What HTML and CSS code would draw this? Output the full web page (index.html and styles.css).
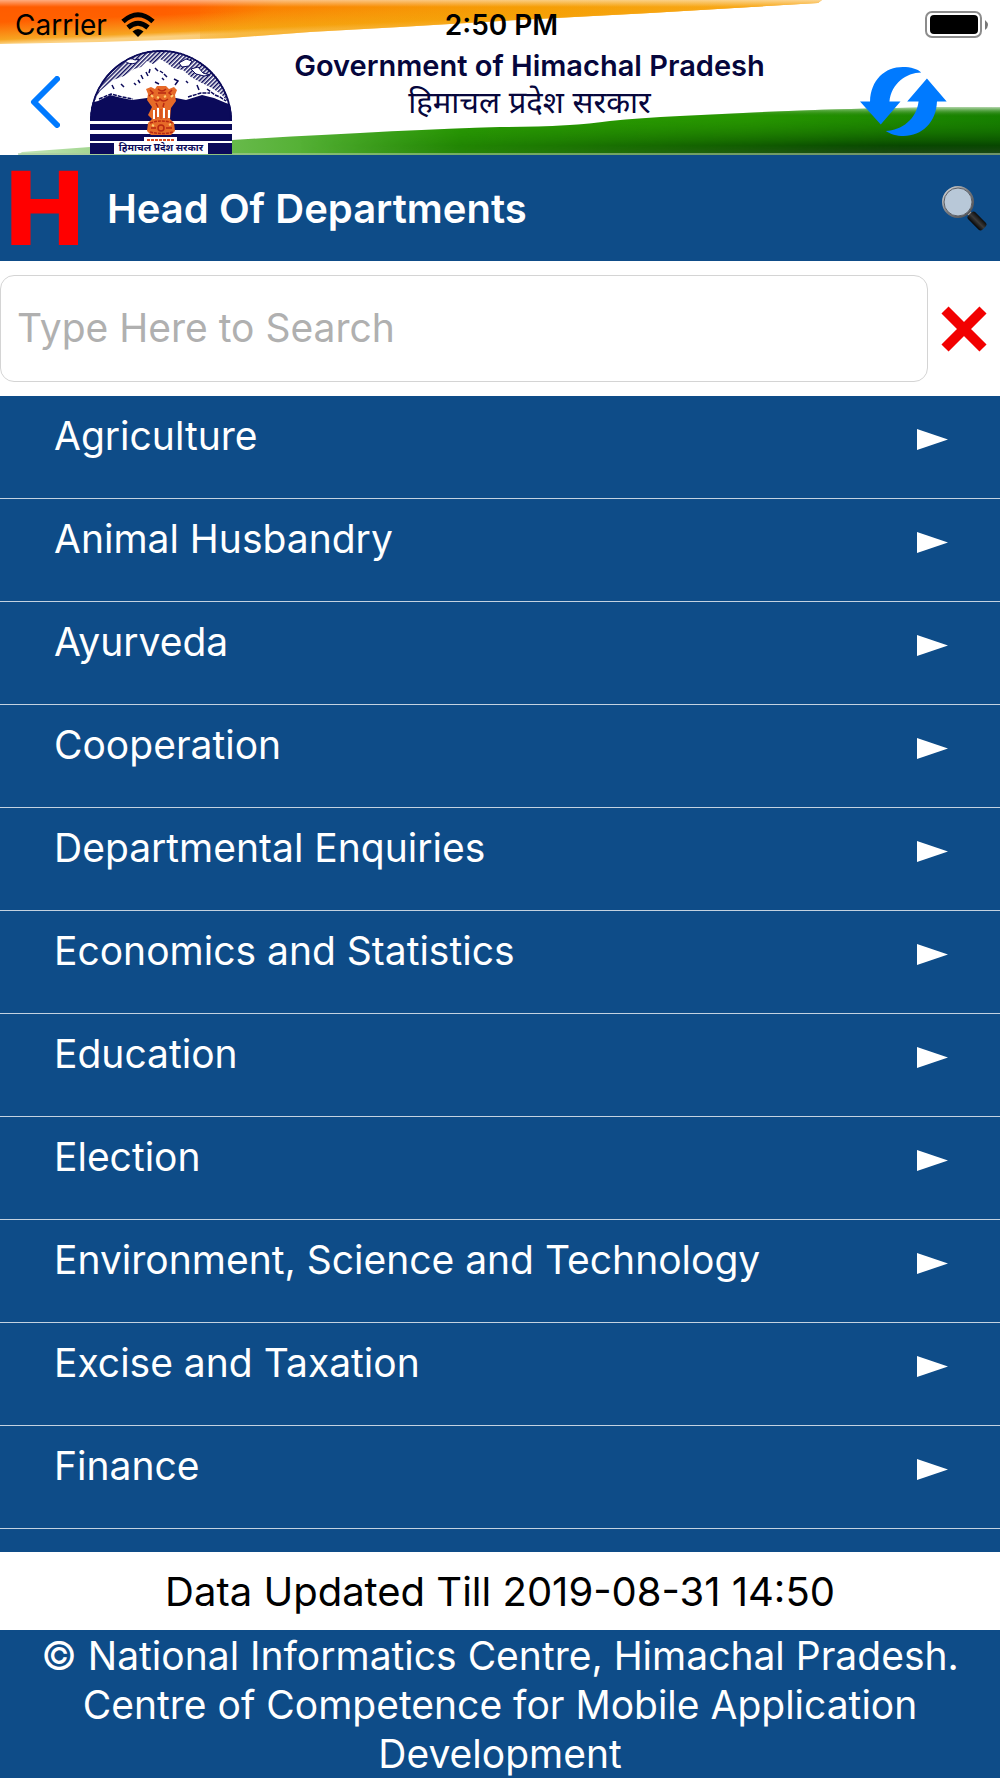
FILE: index.html
```html
<!DOCTYPE html>
<html lang="en">
<head>
    <meta charset="UTF-8">
    <meta name="viewport" content="width=device-width, initial-scale=1.0">
    <title>Head Of Departments</title>
    <link rel="stylesheet" href="styles.css">
</head>
<body>

    <header class="header">
        <!-- tricolour background -->
        <svg class="header-bg" viewBox="0 0 1000 155" preserveAspectRatio="none" aria-hidden="true">
            <defs>
                <linearGradient id="saffron" gradientUnits="userSpaceOnUse" x1="0" y1="0" x2="2" y2="44">
                    <stop offset="0" stop-color="#ff5a00"/>
                    <stop offset="0.5" stop-color="#ff6000"/>
                    <stop offset="0.9" stop-color="#f7a420"/>
                    <stop offset="1" stop-color="#fbd080"/>
                </linearGradient>
                <linearGradient id="amber" gradientUnits="userSpaceOnUse" x1="200" y1="0" x2="228" y2="40">
                    <stop offset="0" stop-color="#f59a00" stop-opacity="0"/>
                    <stop offset="1" stop-color="#f5a408"/>
                    <stop offset="4" stop-color="#f5a408"/>
                </linearGradient>
                <linearGradient id="amberSide" x1="0" y1="0" x2="1" y2="0">
                    <stop offset="0.2" stop-color="#f59a00" stop-opacity="0"/>
                    <stop offset="0.65" stop-color="#f59c00" stop-opacity="0.9"/>
                    <stop offset="1" stop-color="#fbb030"/>
                </linearGradient>
                <linearGradient id="glow" x1="0" y1="0" x2="0" y2="1">
                    <stop offset="0" stop-color="#fff" stop-opacity="0.5"/>
                    <stop offset="1" stop-color="#fff" stop-opacity="0"/>
                </linearGradient>
                <linearGradient id="green" x1="0" y1="0" x2="1" y2="0">
                    <stop offset="0" stop-color="#c4e6b8"/>
                    <stop offset="0.2" stop-color="#6cbc50"/>
                    <stop offset="0.45" stop-color="#2a9c04"/>
                    <stop offset="0.75" stop-color="#279600"/>
                    <stop offset="1" stop-color="#168000"/>
                </linearGradient>
                <linearGradient id="shade" x1="0" y1="0" x2="0" y2="1">
                    <stop offset="0" stop-color="#fff" stop-opacity="0.7"/>
                    <stop offset="0.2" stop-color="#1c7c00" stop-opacity="0"/>
                    <stop offset="0.8" stop-color="#064000" stop-opacity="0.9"/>
                    <stop offset="1" stop-color="#204818"/>
                </linearGradient>
                <linearGradient id="shadeFade" x1="0" y1="0" x2="1" y2="0">
                    <stop offset="0.3" stop-color="#000"/>
                    <stop offset="0.9" stop-color="#fff"/>
                </linearGradient>
                <mask id="shadeMask">
                    <rect width="1000" height="155" fill="url(#shadeFade)"/>
                </mask>
            </defs>
            <path d="M0 0H822L818 3L650 13L500 21L400 27L310 32L230 38L100 42L0 44Z" fill="url(#saffron)"/>
            <path d="M0 0H822L818 3L650 13L500 21L400 27L310 32L230 38L100 42L0 44Z" fill="url(#amberSide)"/>
            <path d="M200 0H822L818 3L650 13L500 21L400 27L310 32L230 38L200 39Z" fill="url(#amber)" opacity="0.4"/>
            <rect width="822" height="7" fill="url(#glow)"/>
            <path d="M18 155L22 152L90 147L232 140Q400 130 500 127Q570 127 610 121Q640 118 680 116Q840 107 1000 107V155Z" fill="url(#green)"/>
            <path d="M18 155L22 152L90 147L232 140Q400 130 500 127Q570 127 610 121Q640 118 680 116Q840 107 1000 107V155Z" fill="url(#shade)" mask="url(#shadeMask)"/>
            <rect x="18" y="153" width="982" height="2" fill="#a8c8a0" opacity="0.6"/>
        </svg>

        <div class="status-bar">
            <div class="carrier">
                <span>Carrier</span>
                <svg width="34" height="25" viewBox="0 0 34 25" aria-hidden="true">
                    <g fill="none" stroke="#000" stroke-width="5">
                        <path d="M2 9.500Q17-4 32 9.500"/>
                        <path d="M7 15.500Q17 7 27 15.500"/>
                    </g>
                    <path d="M11.500 19.500Q17 14.500 22.500 19.500L17 25Z"/>
                </svg>
            </div>
            <span class="time">2:50 PM</span>
            <svg class="battery" width="63" height="27" viewBox="0 0 63 27" aria-hidden="true">
                <rect x="1" y="1" width="55" height="25" rx="6" fill="#fff" stroke="#8c8c8c" stroke-width="2"/>
                <rect x="5" y="4" width="48" height="19" rx="4"/>
                <path d="M60 9Q66 14 60 19Z" fill="#777"/>
            </svg>
        </div>

        <div class="brand-bar">
            <button type="button" class="btn back" aria-label="Back">
                <svg width="30" height="52" viewBox="0 0 30 52">
                    <path d="M27 3L4 26L27 49" fill="none" stroke="#007aff" stroke-width="6" stroke-linecap="round" stroke-linejoin="round"/>
                </svg>
            </button>

            <!-- state emblem -->
            <svg class="emblem" width="142" height="105" viewBox="0 0 142 105" role="img" aria-label="Himachal Pradesh emblem">
                <defs>
                    <pattern id="hatch" width="3" height="3" patternUnits="userSpaceOnUse" patternTransform="rotate(45)">
                        <rect width="3" height="3" fill="#fff"/>
                        <rect width="1.500" height="3" fill="#0b0a5a"/>
                    </pattern>
                    <clipPath id="dome">
                        <path d="M0 72A71 71 0 0 1 142 72Z"/>
                    </clipPath>
                </defs>
                <g clip-path="url(#dome)">
                    <rect width="142" height="72" fill="url(#hatch)"/>
                    <path d="M3 55L10 42L23 31L34 27L44 20L51 18L57 12L63 15L70 10L77 14L83 19L93 21L101 28L110 33L122 39L132 46L140 56L130 62H10Z" fill="#fff"/>
                    <path d="M35 12Q40 8 45 11L49 10L46 14Q39 16 35 12Z" fill="#fff" stroke="#0b0a5a"/>
                    <path d="M89 14L96 10L102 12L99 17L92 18Z" fill="#fff" stroke="#0b0a5a"/>
                    <path d="M101 20L108 18L113 24L120 26L114 27L106 25Z" fill="#fff" stroke="#0b0a5a"/>
                    <path d="M0 54L8 52L20 46L32 49L42 51L57 49H86L96 51L112 46L124 49L136 54L142 56V72H0Z" fill="#0b0a5a"/>
                    <g fill="none" stroke="#0b0a5a" stroke-width="1.500">
                        <path d="M9 50L21 45L32 48L43 50M98 48L111 44L120 44M117 40L125 46L130 48L136 52" stroke-dasharray="4 1"/>
                        <path d="M22 36l2 4M31 35l3 3M44 34l2 2M48 31l2 3M51 26l2 4M56 23l2 4M60 20l-1 4M65 19l3 3M70 22l3 2M74 25l3 3M72 29l2 2M65 33l4 2M84 30l4 2l-3 4M96 32l2 2M107 36l2 5"/>
                    </g>
                    <path d="M1 72A70 70 0 0 1 141 72" fill="none" stroke="#0b0a5a" stroke-width="2"/>
                </g>
                <rect y="72" width="142" height="33" fill="#fff"/>
                <g fill="#0b0a5a">
                    <rect y="75" width="142" height="6"/>
                    <rect y="85" width="142" height="7"/>
                    <rect y="94" width="24" height="11"/>
                    <rect x="118" y="94" width="24" height="11"/>
                </g>
                <rect x="24" y="93" width="94" height="12" fill="#fff"/>
                <rect x="54" y="88" width="33" height="6" fill="#fff"/>
                <path d="M57 91H85" stroke="#d84a20" stroke-width="2" stroke-dasharray="3 1"/>
                <!-- lion capital -->
                <path d="M58 66L62 58L57 51L58 45L56 40L61 38L65 40L67 37L76 37L79 40L84 38L87 41L85 46L86 52L81 59L80 70L84 74L85 82L81 86H61L57 82L58 74L62 70Z" fill="#e66a28"/>
                <g fill="none" stroke="#b82812" stroke-width="1.500">
                    <path d="M60 41l3 3l-4 3M68 40q4 4 8 0M68 44h8M82 41l-3 3l4 3M64 50q3 4 6 0q3 4 8 0M66 54l2 4M74 54l-1 4"/>
                    <path d="M60 74q12-4 23 0M60 83q12 3 23 0" stroke-dasharray="3 1"/>
                    <circle cx="71" cy="79" r="3"/>
                    <path d="M61 79h5M76 79h6"/>
                </g>
                <g fill="none" stroke="#fff" stroke-width="2">
                    <path d="M64 61v9M68 59v9M74 59v10M79 61v8"/>
                </g>
                <path d="M66 61v9M71 60v10M76 61v9" stroke="#c83c18"/>
                <path d="M61 46l2 2M67 48l2 1M74 48l2-1M81 48l2-2M62 76l2 1M79 76l2-1" stroke="#ffd070" stroke-width="2"/>
                <text class="emblem-text" x="71" y="102" text-anchor="middle">हिमाचल प्रदेश सरकार</text>
            </svg>

            <div class="brand">
                <div class="brand-en">Government of Himachal Pradesh</div>
                <div class="brand-hi" lang="hi">हिमाचल प्रदेश सरकार</div>
            </div>

            <button type="button" class="btn refresh" aria-label="Refresh">
                <svg width="87" height="69" viewBox="30 50 260 206">
                    <g fill="#007aff">
                        <path d="M30 153H60C62 88 105 50 158 50C182 50 202 56 213 66C168 67 124 98 118 153H151L92 222Z"/>
                        <path d="M230 84L289 153H260C258 215 215 256 160 256C140 256 120 250 107 241C155 239 199 206 205 153H171Z"/>
                    </g>
                </svg>
            </button>
        </div>
    </header>

    <div class="title-bar">
        <span class="title-icon" aria-hidden="true">H</span>
        <h1>Head Of Departments</h1>
        <button type="button" class="btn" aria-label="Search">
            <svg width="46" height="46" viewBox="0 0 46 46">
                <defs>
                    <linearGradient id="rim" x1="0" y1="0" x2="1" y2="1">
                        <stop offset="0" stop-color="#e0e0e0"/>
                        <stop offset="0.5" stop-color="#77787c"/>
                        <stop offset="1" stop-color="#48494c"/>
                    </linearGradient>
                    <linearGradient id="handle" x1="0" y1="0" x2="1" y2="0">
                        <stop offset="0" stop-color="#050505"/>
                        <stop offset="0.5" stop-color="#3a3a3a"/>
                        <stop offset="1" stop-color="#0c0c0c"/>
                    </linearGradient>
                </defs>
                <path d="M26 26L31 31" stroke="#aaa" stroke-width="4"/>
                <circle cx="17" cy="17" r="15" fill="#b8c8d8" stroke="url(#rim)" stroke-width="2"/>
                <circle cx="17" cy="17" r="14" fill="none" stroke="#5d6168"/>
                <rect x="-5" y="-10" width="10" height="20" rx="3" transform="translate(36 36) rotate(-45)" fill="url(#handle)"/>
            </svg>
        </button>
    </div>

    <form class="search-bar">
        <input type="text" id="search" placeholder="Type Here to Search" aria-label="Type Here to Search">
        <button type="reset" class="btn" aria-label="Clear">
            <svg width="46" height="46" viewBox="0 0 46 46">
                <path d="M4 4L42 42M42 4L4 42" stroke="#f20000" stroke-width="10"/>
            </svg>
        </button>
    </form>

    <ul class="list">
        <li><a href="#">Agriculture</a></li>
        <li><a href="#">Animal Husbandry</a></li>
        <li><a href="#">Ayurveda</a></li>
        <li><a href="#">Cooperation</a></li>
        <li><a href="#">Departmental Enquiries</a></li>
        <li><a href="#">Economics and Statistics</a></li>
        <li><a href="#">Education</a></li>
        <li><a href="#">Election</a></li>
        <li><a href="#">Environment, Science and Technology</a></li>
        <li><a href="#">Excise and Taxation</a></li>
        <li><a href="#">Finance</a></li>
    </ul>

    <div class="updated">Data Updated Till 2019-08-31 14:50</div>
    <footer class="footer">© National Informatics Centre, Himachal Pradesh. Centre of Competence for Mobile Application Development</footer>

</body>
</html>
```
FILE: styles.css
```css
* {
    box-sizing: border-box;
}
body {
    display: flex;
    flex-direction: column;
    height: 100vh;
    margin: 0;
    font-family: Inter, "Noto Sans", sans-serif;
    font-size: 39px;
    background-color: #fff;
}
.btn {
    display: flex;
    padding: 0;
    border: none;
    background: none;
    cursor: pointer;
}

/* header */
.header {
    position: relative;
    color: #06063c;
}
.header-bg {
    position: absolute;
    top: 0;
    left: 0;
    width: 100%;
    height: 100%;
    z-index: -1;
}
.status-bar {
    display: grid;
    grid-template-columns: 1fr auto 1fr;
    align-items: center;
    height: 49px;
    padding: 0 12px 0 15px;
    font-size: 28px;
    color: #000;
}
.carrier {
    display: flex;
    align-items: center;
    gap: 14px;
}
.time {
    font-weight: 600;
}
.battery {
    justify-self: end;
}
.brand-bar {
    display: flex;
    align-items: center;
    height: 106px;
}
.back {
    width: 90px;
    padding-left: 30px;
}
.emblem {
    align-self: flex-start;
}
.emblem-text {
    font-family: "Noto Sans", sans-serif;
    font-size: 10px;
    font-weight: bold;
    fill: #0b0a5a;
}
.brand {
    flex: 1;
    align-self: flex-start;
    text-align: center;
}
.brand-en {
    font-size: 29px;
    font-weight: 600;
    line-height: 34px;
}
.brand-hi {
    font-size: 31px;
    line-height: 38px;
}
.refresh {
    padding: 0 53px 2px 33px;
}

/* title */
.title-bar {
    display: flex;
    align-items: center;
    height: 106px;
    padding: 0 13px 0 0;
    color: #fff;
    background-color: #0e4c88;
}
.title-bar h1 {
    flex: 1;
    margin: 0;
    font-size: 40px;
    font-weight: 600;
}
.title-icon {
    width: 107px;
    padding: 4px 0 0 2px;
    font-family: "DejaVu Sans", sans-serif;
    font-size: 102px;
    font-weight: bold;
    line-height: 102px;
    color: #f00;
}

/* search */
.search-bar {
    display: flex;
    align-items: center;
    gap: 13px;
    padding: 14px 13px 14px 0;
}
.search-bar input {
    flex: 1;
    min-width: 0;
    height: 107px;
    padding: 0 16px 2px;
    border: 1px solid #d4d4d4;
    border-radius: 14px;
    font: inherit;
}
.search-bar input::placeholder {
    color: #b0b0b0;
}

/* departments */
.list {
    flex: 1;
    min-height: 0;
    margin: 0;
    padding: 0;
    overflow: hidden;
    list-style: none;
    background-color: #0e4c88;
}
.list a {
    display: flex;
    justify-content: space-between;
    height: 103px;
    padding: 16px 52px 0 54px;
    border-bottom: 1px solid #c3d2e1;
    line-height: 48px;
    color: #fff;
    text-decoration: none;
}
.list a::after {
    content: "";
    width: 31px;
    height: 21px;
    margin-top: 17px;
    background-color: #fff;
    clip-path: polygon(0 0, 100% 50%, 0 100%);
}

/* bottom */
.updated {
    padding: 16px 0 14px;
    font-size: 40px;
    line-height: 48px;
    text-align: center;
    color: #000;
}
.footer {
    padding: 1px 20px 0;
    line-height: 49px;
    text-align: center;
    color: #fff;
    background-color: #0e4c88;
}
```
